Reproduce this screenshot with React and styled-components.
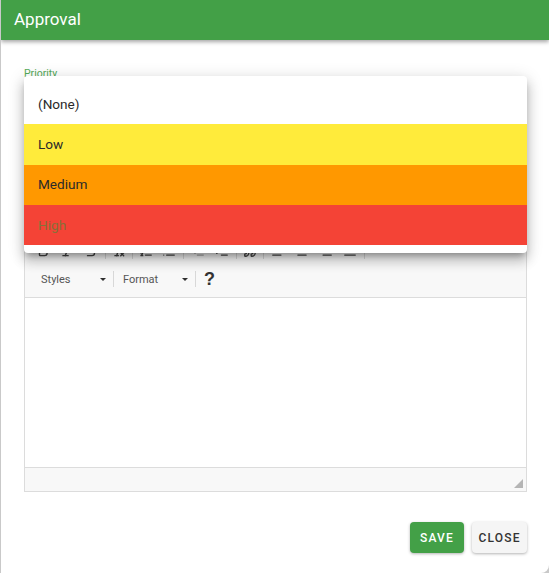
import React from "react";
import styled, { createGlobalStyle } from "styled-components";
import {
  Bold,
  Italic,
  Strikethrough,
  RemoveFormatting,
  ListOrdered,
  List,
  Outdent,
  Indent,
  Quote,
  AlignLeft,
  AlignCenter,
  AlignRight,
  AlignJustify,
} from "lucide-react";

const GlobalStyle = createGlobalStyle`
  html, body {
    margin: 0;
    height: 100%;
    overflow: hidden;
    background: #c9c9c9;
  }
  body {
    font-family: Roboto, "Liberation Sans", sans-serif;
  }
  * {
    box-sizing: border-box;
  }
`;

const Dialog = styled.div`
  position: relative;
  display: flex;
  flex-direction: column;
  width: 548px;
  height: 573px;
  margin-left: 1px;
  background: #fff;
  border-bottom-right-radius: 8px;
  overflow: hidden;
`;

const Header = styled.header`
  display: flex;
  align-items: center;
  height: 40px;
  flex: none;
  padding: 0 0 2px 13px;
  background: #43a047;
  color: #fff;
  font-size: 17px;
  box-shadow: 0 2px 4px rgba(0, 0, 0, 0.35);
  z-index: 1;
`;

const Body = styled.div`
  display: flex;
  flex-direction: column;
  flex: 1;
  padding: 27px 22px 20px 23px;
`;

const PriorityField = styled.div`
  height: 165px;
  flex: none;
`;

const FieldLabel = styled.label`
  display: block;
  font-size: 10.5px;
  line-height: 13px;
  color: #55aa59;
`;

const Menu = styled.ul`
  position: absolute;
  top: 76px;
  left: 23px;
  width: 503px;
  margin: 0;
  padding: 8px 0;
  list-style: none;
  background: #fff;
  border-radius: 4px;
  box-shadow: 0 5px 6px -3px rgba(0, 0, 0, 0.3), 0 8px 12px 1px rgba(0, 0, 0, 0.16),
    0 3px 16px 2px rgba(0, 0, 0, 0.12);
  z-index: 2;
`;

const MenuItem = styled.li`
  display: flex;
  align-items: center;
  height: 40.33px;
  padding: 0 0 1px 14px;
  font-size: 13.6px;
  color: ${({ $color }) => $color || "#2a2a2a"};
  background: ${({ $bg }) => $bg || "#fff"};
`;

const Editor = styled.div`
  display: flex;
  flex-direction: column;
  flex: none;
  height: 260px;
  border: 1px solid #dcdcdc;
`;

const Toolbar = styled.div`
  display: flex;
  flex-direction: column;
  flex: none;
  height: 65px;
  background: #f8f8f8;
  border-bottom: 1px solid #dcdcdc;
`;

const IconRow = styled.div`
  display: flex;
  align-items: center;
  height: 30px;
  padding: 6px 0 0 6px;
`;

const ComboRow = styled.div`
  display: flex;
  align-items: center;
  height: 32px;
  padding-left: 16px;
`;

const ToolButton = styled.span`
  display: flex;
  justify-content: center;
  width: ${({ $width }) => $width || 24}px;
  color: #474747;
`;

const Separator = styled.span`
  flex: none;
  width: 1px;
  height: 16px;
  margin: 0 ${({ $after }) => $after || 2}px 0 ${({ $before }) => $before || 2}px;
  background: #d8d8d8;
`;

const Combo = styled.div`
  display: flex;
  align-items: center;
  justify-content: space-between;
  width: 65px;
  font-size: 11px;
  color: #555;
`;

const Caret = styled.span`
  width: 0;
  height: 0;
  border-left: 3px solid transparent;
  border-right: 3px solid transparent;
  border-top: 3px solid #2f2f2f;
`;

const Help = styled.span`
  font-family: "Liberation Sans", sans-serif;
  font-size: 18px;
  font-weight: 700;
  color: #333;
`;

const EditArea = styled.div`
  flex: 1;
  background: #fff;
`;

const StatusBar = styled.div`
  display: flex;
  justify-content: flex-end;
  align-items: flex-end;
  flex: none;
  height: 24px;
  padding: 0 3px 3px 0;
  background: #f8f8f8;
  border-top: 1px solid #dcdcdc;
`;

const Actions = styled.div`
  display: flex;
  justify-content: flex-end;
  gap: 8px;
  margin-top: 30px;
`;

const Button = styled.button`
  height: 31px;
  padding: 0;
  width: ${({ $width }) => $width}px;
  border: none;
  border-radius: 4px;
  font-family: Roboto, sans-serif;
  font-size: 12px;
  font-weight: 500;
  letter-spacing: 1.2px;
  background: ${({ $primary }) => ($primary ? "#43a047" : "#f5f5f5")};
  color: ${({ $primary }) => ($primary ? "#fff" : "#333")};
  box-shadow: 0 1px 3px rgba(0, 0, 0, 0.3);
`;

const iconProps = { size: 14, strokeWidth: 2.4 };

const App = () => (
  <>
    <GlobalStyle />
    <Dialog>
      <Header>Approval</Header>
      <Body>
        <PriorityField>
          <FieldLabel>Priority</FieldLabel>
        </PriorityField>
        <Editor>
          <Toolbar>
            <IconRow>
              <ToolButton><Bold {...iconProps} /></ToolButton>
              <ToolButton><Italic {...iconProps} /></ToolButton>
              <ToolButton><Strikethrough {...iconProps} /></ToolButton>
              <Separator />
              <ToolButton $width={22}><RemoveFormatting {...iconProps} /></ToolButton>
              <Separator />
              <ToolButton $width={22}><ListOrdered {...iconProps} /></ToolButton>
              <ToolButton><List {...iconProps} /></ToolButton>
              <Separator />
              <ToolButton><Outdent {...iconProps} color="#aaa" /></ToolButton>
              <ToolButton><Indent {...iconProps} /></ToolButton>
              <Separator />
              <ToolButton $width={22}><Quote {...iconProps} /></ToolButton>
              <Separator />
              <ToolButton><AlignLeft {...iconProps} /></ToolButton>
              <ToolButton><AlignCenter {...iconProps} /></ToolButton>
              <ToolButton><AlignRight {...iconProps} /></ToolButton>
              <ToolButton><AlignJustify {...iconProps} /></ToolButton>
              <Separator />
            </IconRow>
            <ComboRow>
              <Combo>Styles<Caret /></Combo>
              <Separator $before={7} $after={9} />
              <Combo>Format<Caret /></Combo>
              <Separator $before={7} $after={8} />
              <Help>?</Help>
            </ComboRow>
          </Toolbar>
          <EditArea />
          <StatusBar>
            <svg width="9" height="9" viewBox="0 0 9 9">
              <path d="M9 0V9H0z" fill="#b5b5b5" />
            </svg>
          </StatusBar>
        </Editor>
        <Actions>
          <Button $primary $width={54}>SAVE</Button>
          <Button $width={55}>CLOSE</Button>
        </Actions>
      </Body>
      <Menu>
        <MenuItem>(None)</MenuItem>
        <MenuItem $bg="#ffeb3b">Low</MenuItem>
        <MenuItem $bg="#ff9800">Medium</MenuItem>
        <MenuItem $bg="#f44336" $color="#877038">High</MenuItem>
      </Menu>
    </Dialog>
  </>
);

export default App;
